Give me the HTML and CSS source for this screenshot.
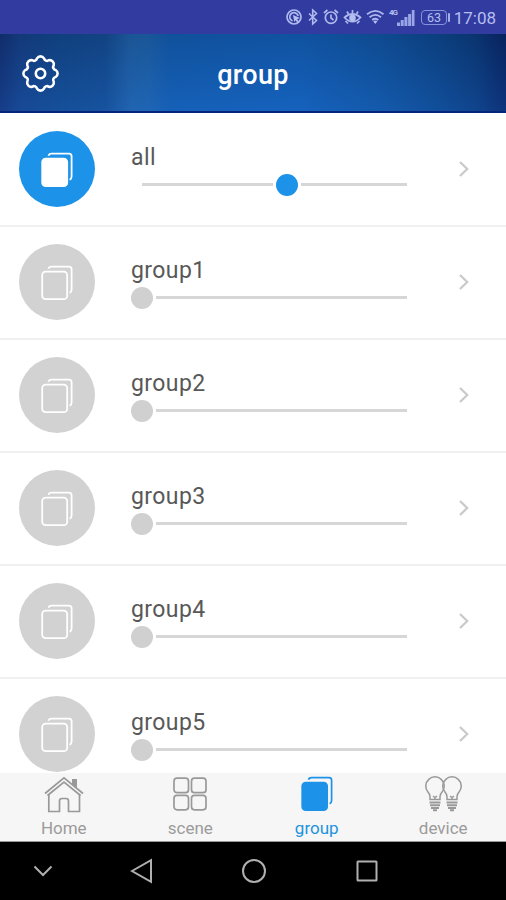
FILE: index.html
```html
<!DOCTYPE html>
<html lang="en">
<head>
<meta charset="utf-8">
<title>group</title>
<link rel="stylesheet" href="styles.css">
</head>
<body>
<svg class="defs" aria-hidden="true">
  <symbol id="pages" viewBox="0 0 34 38">
    <rect class="front" x="2.2" y="7.6" width="25" height="27.6" rx="3.5"/>
    <path class="back" d="M8.5 4.8Q9 2.6 11.5 2.6H29Q31.6 2.6 31.6 5.2V25.5Q31.6 28 29.6 28.8"/>
  </symbol>
  <symbol id="chevron" viewBox="0 0 12 18"><path d="M2 2L9.2 9L2 16"/></symbol>
  <symbol id="bulb" viewBox="0 0 20 36">
    <path d="M5 23.500V20.500Q4.800 18 2.800 15.800A9.200 9.200 0 1 1 17.200 15.800Q15.200 18 15 20.500V23.500Z"/>
    <path d="M8 20L10 21.500L12 20M10 21.500V23.500"/>
    <path class="base" d="M4.500 26.500H15.500M5 29.300H15M6 32H14M8 34.300H12"/>
  </symbol>
</svg>
<div class="phone">
  <div class="status">
    <svg class="status-icons" width="104" height="20" viewBox="0 0 104 20">
      <circle cx="9" cy="10" r="7"/>
      <path d="M7.500 14A4.300 4.300 0 1 1 13.200 9"/>
      <path class="solid" d="M8 8L15 11L12 12.200L14.500 15L12.800 16L10.500 13.300L9.300 15Z"/>
      <path d="M24 6.500L31.500 13.500L27.700 17V3L31.500 6.500L24 13.500" stroke-width="1.600"/>
      <circle cx="46" cy="10.700" r="5.700"/>
      <path d="M46 7.400V11L48.500 13M39 6L42.400 3M53 6L49.600 3"/>
      <path d="M59.500 10.500Q67.500 3.500 75.500 10.500Q67.500 19 59.500 10.500Z"/>
      <circle class="solid" cx="67.500" cy="11" r="3.300"/>
      <path d="M67.500 3V6M62 4.500L63.500 7M73 4.500L71.500 7M60.500 14L63 16.500M74.500 14L72 16.500"/>
      <path d="M82 7.200Q90.500 .500 98.500 7.200M84.500 10.200Q90.500 5.500 96 10.200M87.200 13Q90.500 10.500 93.300 13" stroke-width="1.800"/>
      <path class="solid" d="M88.200 14.200Q90.300 12.800 92.400 14.200L90.300 17Z"/>
    </svg>
    <span class="net">4G</span>
    <svg class="signal" width="18" height="16" viewBox="0 0 18 16"><path d="M0 12.500H3V16H0ZM3.700 10H6.700V16H3.700ZM7.400 7H10.400V16H7.400ZM11.100 4H14.100V16H11.100ZM14.800 0H17.500V16H14.800Z"/></svg>
    <span class="battery">63</span>
    <span class="clock">17:08</span>
  </div>
  <header class="header">
    <svg class="gear" width="41" height="41" viewBox="-20 -20 40 40">
      <path d="M14.800 -3.400A4 4 0 0 1 14.800 3.400A3 3 0 0 0 12.900 8.050A4 4 0 0 1 8.050 12.900A3 3 0 0 0 3.400 14.800A4 4 0 0 1 -3.400 14.800A3 3 0 0 0 -8.050 12.900A4 4 0 0 1 -12.900 8.050A3 3 0 0 0 -14.800 3.400A4 4 0 0 1 -14.800 -3.400A3 3 0 0 0 -12.900 -8.050A4 4 0 0 1 -8.050 -12.900A3 3 0 0 0 -3.400 -14.800A4 4 0 0 1 3.400 -14.800A3 3 0 0 0 8.050 -12.900A4 4 0 0 1 12.900 -8.050A3 3 0 0 0 14.800 -3.400Z"/>
      <circle r="4.600"/>
    </svg>
    <h1>group</h1>
  </header>
  <main class="list">
    <div class="row on">
      <div class="avatar"><svg><use href="#pages"/></svg></div>
      <div class="control"><div class="name">all</div><div class="slider"><i class="line low"></i><i class="knob"></i><i class="line"></i></div></div>
      <svg class="chevron"><use href="#chevron"/></svg>
    </div>
    <div class="row">
      <div class="avatar"><svg><use href="#pages"/></svg></div>
      <div class="control"><div class="name">group1</div><div class="slider"><i class="knob"></i><i class="line"></i></div></div>
      <svg class="chevron"><use href="#chevron"/></svg>
    </div>
    <div class="row">
      <div class="avatar"><svg><use href="#pages"/></svg></div>
      <div class="control"><div class="name">group2</div><div class="slider"><i class="knob"></i><i class="line"></i></div></div>
      <svg class="chevron"><use href="#chevron"/></svg>
    </div>
    <div class="row">
      <div class="avatar"><svg><use href="#pages"/></svg></div>
      <div class="control"><div class="name">group3</div><div class="slider"><i class="knob"></i><i class="line"></i></div></div>
      <svg class="chevron"><use href="#chevron"/></svg>
    </div>
    <div class="row">
      <div class="avatar"><svg><use href="#pages"/></svg></div>
      <div class="control"><div class="name">group4</div><div class="slider"><i class="knob"></i><i class="line"></i></div></div>
      <svg class="chevron"><use href="#chevron"/></svg>
    </div>
    <div class="row">
      <div class="avatar"><svg><use href="#pages"/></svg></div>
      <div class="control"><div class="name">group5</div><div class="slider"><i class="knob"></i><i class="line"></i></div></div>
      <svg class="chevron"><use href="#chevron"/></svg>
    </div>
  </main>
  <nav class="tabs">
    <a class="tab">
      <svg width="42" height="38" viewBox="0 0 42 38"><path d="M2 18.500L21 2.800L40 18.500M4.500 20.500L21 7L37.500 20.500"/><path d="M5.800 20V36.500H16.500V26Q16.500 23.500 19 23.500H23Q25.500 23.500 25.500 26V36.500H36.500V20"/><path class="chimney" d="M29 4H34V13L29 9Z"/></svg>
      <span>Home</span>
    </a>
    <a class="tab">
      <svg width="36" height="38" viewBox="0 0 36 38"><rect x="2" y="3.200" width="14.500" height="14.500" rx="3"/><rect x="19.500" y="3.200" width="14.500" height="14.500" rx="3"/><rect x="2" y="20.300" width="14.500" height="14.500" rx="3"/><rect x="19.500" y="20.300" width="14.500" height="14.500" rx="3"/></svg>
      <span>scene</span>
    </a>
    <a class="tab active">
      <svg width="34" height="38"><use href="#pages"/></svg>
      <span>group</span>
    </a>
    <a class="tab">
      <span class="bulbs"><svg width="20" height="36"><use href="#bulb"/></svg><svg width="20" height="36"><use href="#bulb"/></svg></span>
      <span>device</span>
    </a>
  </nav>
  <div class="system">
    <svg width="20" height="14" viewBox="0 0 20 14"><path d="M1.500 2.500L10 11L18.500 2.500"/></svg>
    <svg width="24" height="26" viewBox="0 0 24 26"><path d="M2 13L21 2.200V23.800Z"/></svg>
    <svg width="26" height="26" viewBox="0 0 26 26"><circle cx="13" cy="13" r="11"/></svg>
    <svg width="24" height="24" viewBox="0 0 24 24"><rect x="2.500" y="2.500" width="19" height="19" rx=".5"/></svg>
  </div>
</div>
</body>
</html>
```
FILE: styles.css
```css
* { box-sizing: border-box; }
body { margin: 0; font-family: Roboto, sans-serif; background: #fff; }
svg { display: block; fill: none; flex: none; }
.defs { position: absolute; width: 0; height: 0; }
.phone { width: 506px; height: 900px; display: flex; flex-direction: column; overflow: hidden; }

.status {
  height: 34px; flex: none; display: flex; align-items: center;
  padding: 1px 10px 0 285px; background: #313ba0; color: #b5bff0;
}
.status-icons { margin-top: -1px; stroke: #aeb9ee; stroke-width: 1.700; }
.status-icons .solid { fill: #b5bff0; stroke: none; }
.net { width: 8px; font-size: 8px; font-weight: 700; line-height: 8px; letter-spacing: -1px; align-self: flex-start; margin-top: 8px; }
.signal { fill: #99a5e4; }
.battery {
  position: relative; width: 26px; height: 15px; margin-left: 6px;
  border: 1.500px solid #8793db; border-radius: 4px;
  font-size: 12.500px; line-height: 13px; text-align: center;
}
.battery::after { content: ""; position: absolute; right: -4px; top: 2px; width: 2px; height: 9px; background: #a5b0ea; border-radius: 1px; }
.clock { margin-left: auto; font-size: 17px; }

.header {
  height: 79px; flex: none; display: grid; grid-template-columns: 60px 1fr 60px; align-items: center;
  border-bottom: 2px solid #05247c;
  background:
    linear-gradient(180deg, rgba(10, 50, 100, .25), rgba(30, 110, 210, .28)),
    linear-gradient(90deg, #132a6c 0, #153b80 20px, #124485 60px, #14488c 105px, #2160a5 130px, #1f62a9 148px, #125bae 170px, #125db5 300px, #10529e 380px, #0c4285 440px, #0a3573 475px, #08215f 500px, #081d5c 506px);
}
.gear { margin: 2px 0 0 20px; stroke: #fff; stroke-width: 2.500; }
.header h1 { margin: 4px 0 0; text-align: center; font-size: 27px; line-height: 32px; font-weight: 500; letter-spacing: .3px; color: #fff; }

.list { flex: 1; min-height: 0; overflow: hidden; background: #fff; padding-top: 1px; }
.row { height: 113px; display: flex; align-items: center; padding: 0 35px 0 19px; border-bottom: 2px solid #f0f0f0; }
.avatar { width: 76px; height: 76px; margin-top: -1px; border-radius: 50%; background: #d2d2d2; display: flex; align-items: center; justify-content: center; }
.avatar svg { width: 34px; height: 38px; margin-top: 1px; stroke: #fff; stroke-width: 1.800; }
.on .avatar { background: #1c93e8; }
.on .avatar svg { fill: #fff; }
#pages .back { fill: none; }
.control { width: 276px; height: 100%; margin-left: 36px; padding-top: 30px; }
.name { height: 28.500px; font-size: 23px; line-height: 28px; letter-spacing: .4px; color: #585858; }
.slider { height: 24px; display: flex; align-items: center; gap: 3px; }
.knob { width: 22px; height: 22px; border-radius: 50%; background: #d0d0d0; }
.line { height: 3px; flex: 1; background: #d6d6d6; }
.line.low { flex: 0 0 131px; margin-left: 11px; }
.on .knob { background: #1c93e8; }
.chevron { width: 12px; height: 18px; margin: -1px 0 0 51px; stroke: #cacaca; stroke-width: 2.300; }

.tabs { height: 69px; flex: none; display: grid; grid-template-columns: repeat(4, 1fr); background: #f6f6f6; border-bottom: 1px solid #999; }
.tab { display: flex; flex-direction: column; align-items: center; padding: 2px 0 0 1px; color: #9b9b9b; font-size: 17px; line-height: 20px; }
.tab svg { stroke: #999; stroke-width: 1.700; }
.tab > span:last-child { margin-top: 5px; }
.tab svg .chimney { fill: #999; stroke: none; }
.tab.active { color: #1c93dc; }
.active svg { stroke: #1c93e8; fill: #1c93e8; }
.bulbs { display: flex; height: 38px; align-items: center; }
.bulbs svg { overflow: visible; stroke-width: 1.500; }
.bulbs svg + svg { margin-left: -3.500px; }
#bulb .base { stroke-width: 2; }

.system { height: 58px; flex: none; background: #000; display: grid; grid-template-columns: 85px 113px 112px 113px; align-items: center; justify-items: center; }
.system svg { stroke: #b0b0b0; stroke-width: 2; }
```
